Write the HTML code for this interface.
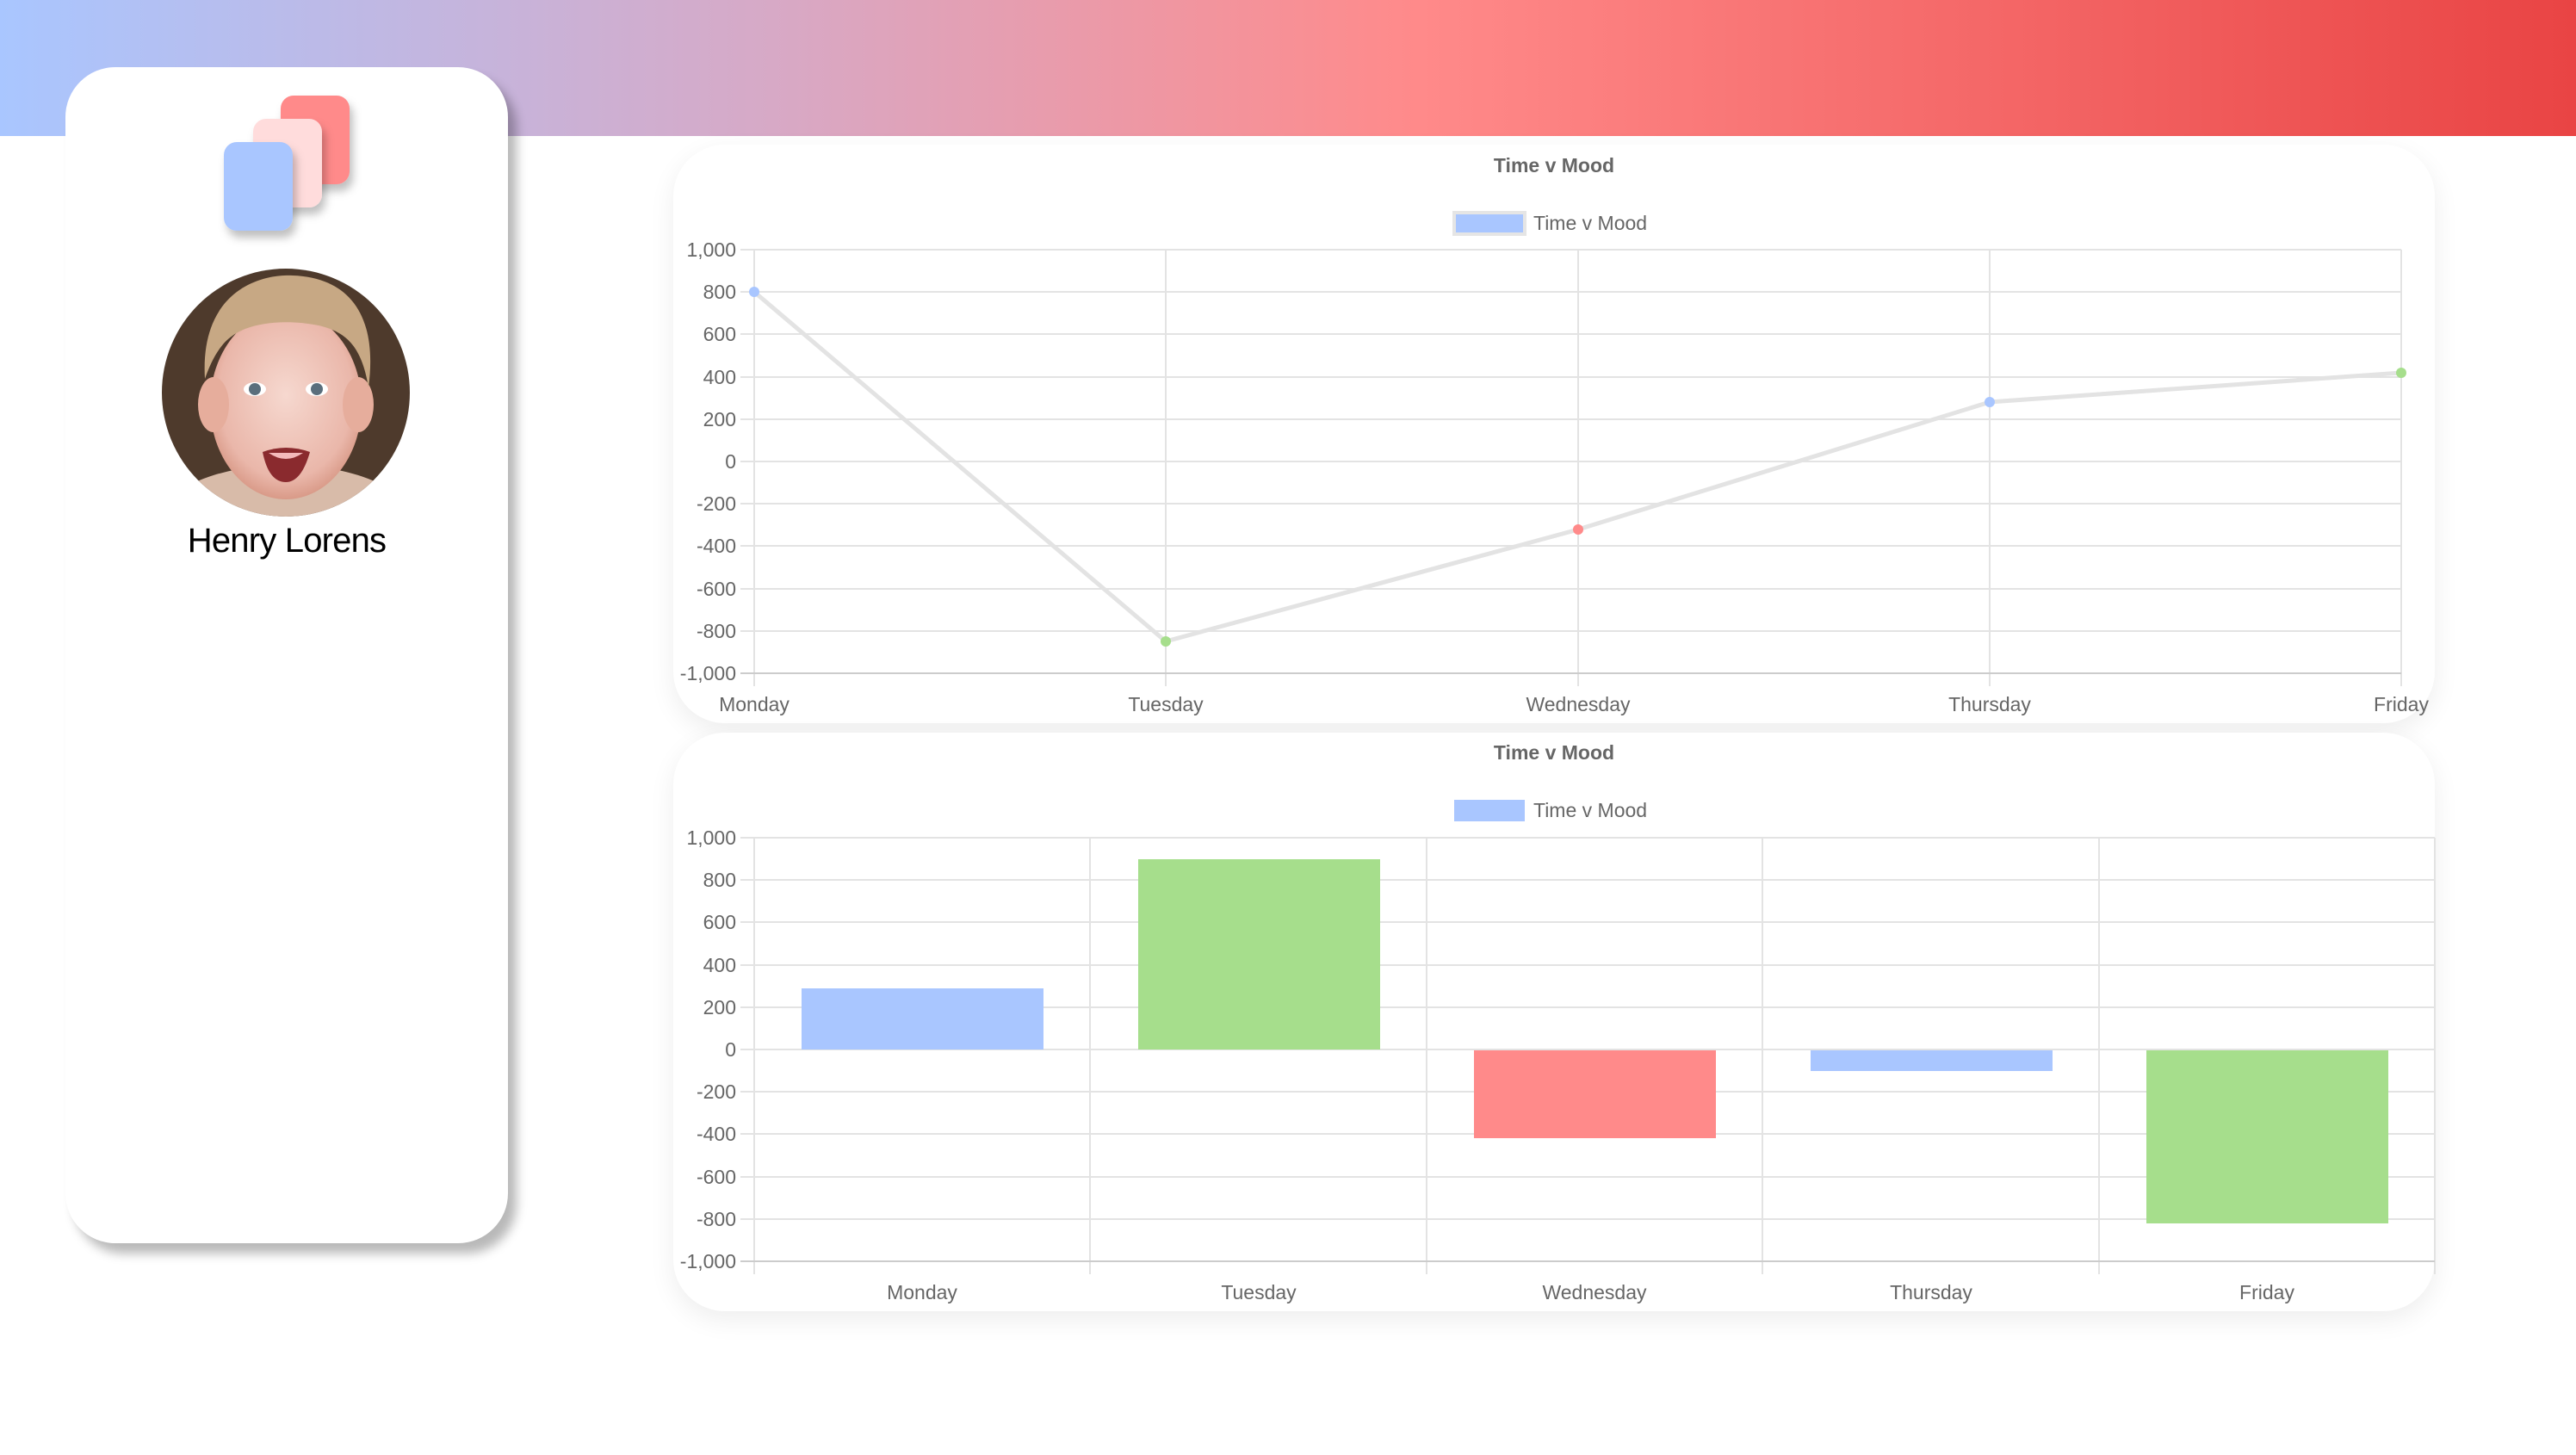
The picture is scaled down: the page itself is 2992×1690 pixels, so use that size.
<!DOCTYPE html>
<html><head><meta charset="utf-8"><style>
html,body{margin:0;padding:0;width:2992px;height:1690px;overflow:hidden;background:#fff;font-family:"Liberation Sans",Arial,sans-serif}
.hdr{position:absolute;left:0;top:0;width:2992px;height:158px;background:linear-gradient(90deg,#a9c6ff 0%,#d7a9c6 30%,#ff8a8a 55%,#e94444 100%)}
.side{position:absolute;left:76px;top:78px;width:514px;height:1366px;background:#fff;border-radius:58px;box-shadow:10px 12px 12px rgba(0,0,0,0.28)}
.card{position:absolute;left:782px;width:2046px;height:672px;background:#fff;border-radius:60px;box-shadow:0 10px 30px rgba(0,0,0,0.07)}
.name{position:absolute;left:76px;width:514px;top:606px;text-align:center;font-size:40px;color:#000;letter-spacing:-0.8px}
svg{position:absolute;left:0;top:0}
</style></head><body>
<div class="hdr"></div>
<div class="side"></div>
<div class="card" style="top:168px"></div>
<div class="card" style="top:851px"></div>
<svg width="2992" height="1690" font-family="Liberation Sans, Arial, sans-serif">
<defs>
<filter id="sh" x="-30%" y="-30%" width="160%" height="160%"><feDropShadow dx="4" dy="8" stdDeviation="5" flood-opacity="0.25"/></filter>
<clipPath id="cc"><circle cx="332" cy="456" r="144"/></clipPath>
<radialGradient id="face" cx="50%" cy="45%" r="55%"><stop offset="0" stop-color="#f6d8cf"/><stop offset="0.8" stop-color="#eab7aa"/><stop offset="1" stop-color="#d99a88"/></radialGradient>
</defs>
<rect x="326" y="111" width="80" height="103" rx="15" fill="#ff8a8a" filter="url(#sh)"/>
<rect x="294" y="138" width="80" height="103" rx="15" fill="#ffdcdc" filter="url(#sh)"/>
<rect x="260" y="165" width="80" height="103" rx="15" fill="#a9c6ff" filter="url(#sh)"/>
<g clip-path="url(#cc)">
<rect x="180" y="300" width="310" height="310" fill="#4e3a2c"/>
<ellipse cx="332" cy="610" rx="150" ry="70" fill="#d8bba9"/>
<ellipse cx="332" cy="470" rx="88" ry="110" fill="url(#face)"/>
<ellipse cx="248" cy="470" rx="18" ry="32" fill="#e6ad9c"/>
<ellipse cx="416" cy="470" rx="18" ry="32" fill="#e6ad9c"/>
<path d="M238 440 C232 340 300 318 340 320 C400 322 440 360 428 450 C420 400 400 385 370 378 C330 370 290 375 270 390 C255 400 245 420 238 440Z" fill="#c7a884"/>
<ellipse cx="296" cy="452" rx="13" ry="8" fill="#fff"/><circle cx="296" cy="452" r="7" fill="#5a6e7c"/>
<ellipse cx="368" cy="452" rx="13" ry="8" fill="#fff"/><circle cx="368" cy="452" r="7" fill="#5a6e7c"/>
<path d="M305 525 Q332 515 360 525 Q350 560 332 560 Q312 560 305 525Z" fill="#8a2a2e"/>
<path d="M312 526 Q332 540 352 526" fill="#f3b9bb"/>
</g>
<g font-size="23" fill="#666">
<text x="1805" y="200" text-anchor="middle" font-weight="bold">Time v Mood</text>
<rect x="1689" y="247" width="82" height="25" fill="#a9c6ff" stroke="#e5e5e5" stroke-width="4"/>
<text x="1781" y="267">Time v Mood</text>
<text x="1805" y="882" text-anchor="middle" font-weight="bold">Time v Mood</text>
<rect x="1689" y="929" width="82" height="25" fill="#a9c6ff"/>
<text x="1781" y="949">Time v Mood</text>
</g>
<g stroke="#e3e3e3" stroke-width="2">
<line x1="860" y1="290" x2="2789" y2="290"/><line x1="860" y1="339" x2="2789" y2="339"/><line x1="860" y1="388" x2="2789" y2="388"/><line x1="860" y1="438" x2="2789" y2="438"/><line x1="860" y1="487" x2="2789" y2="487"/><line x1="860" y1="536" x2="2789" y2="536"/><line x1="860" y1="585" x2="2789" y2="585"/><line x1="860" y1="634" x2="2789" y2="634"/><line x1="860" y1="684" x2="2789" y2="684"/><line x1="860" y1="733" x2="2789" y2="733"/>
<line x1="876" y1="290" x2="876" y2="797"/><line x1="1354" y1="290" x2="1354" y2="797"/><line x1="1833" y1="290" x2="1833" y2="797"/><line x1="2311" y1="290" x2="2311" y2="797"/><line x1="2789" y1="290" x2="2789" y2="797"/>
<line x1="860" y1="782" x2="2789" y2="782" stroke="#ccc"/>
</g>
<polyline points="876,339 1354,745 1833,615 2311,467 2789,433" fill="none" stroke="#e3e3e3" stroke-width="5"/>
<circle cx="876" cy="339" r="6" fill="#a9c6ff"/><circle cx="1354" cy="745" r="6" fill="#a6de8c"/><circle cx="1833" cy="615" r="6" fill="#ff8a8a"/><circle cx="2311" cy="467" r="6" fill="#a9c6ff"/><circle cx="2789" cy="433" r="6" fill="#a6de8c"/>
<g font-size="23" fill="#666" text-anchor="end">
<text x="855" y="298">1,000</text><text x="855" y="347">800</text><text x="855" y="396">600</text><text x="855" y="446">400</text><text x="855" y="495">200</text><text x="855" y="544">0</text><text x="855" y="593">-200</text><text x="855" y="642">-400</text><text x="855" y="692">-600</text><text x="855" y="741">-800</text><text x="855" y="790">-1,000</text>
</g>
<g font-size="23" fill="#666" text-anchor="middle">
<text x="876" y="826">Monday</text><text x="1354" y="826">Tuesday</text><text x="1833" y="826">Wednesday</text><text x="2311" y="826">Thursday</text><text x="2789" y="826">Friday</text>
</g>
<g stroke="#e3e3e3" stroke-width="2">
<line x1="860" y1="973" x2="2828" y2="973"/><line x1="860" y1="1022" x2="2828" y2="1022"/><line x1="860" y1="1071" x2="2828" y2="1071"/><line x1="860" y1="1121" x2="2828" y2="1121"/><line x1="860" y1="1170" x2="2828" y2="1170"/><line x1="860" y1="1219" x2="2828" y2="1219"/><line x1="860" y1="1268" x2="2828" y2="1268"/><line x1="860" y1="1317" x2="2828" y2="1317"/><line x1="860" y1="1367" x2="2828" y2="1367"/><line x1="860" y1="1416" x2="2828" y2="1416"/>
<line x1="876" y1="973" x2="876" y2="1480"/><line x1="1266" y1="973" x2="1266" y2="1480"/><line x1="1657" y1="973" x2="1657" y2="1480"/><line x1="2047" y1="973" x2="2047" y2="1480"/><line x1="2438" y1="973" x2="2438" y2="1480"/><line x1="2828" y1="973" x2="2828" y2="1480"/>
<line x1="860" y1="1465" x2="2828" y2="1465" stroke="#ccc"/>
</g>
<rect x="931" y="1148" width="281" height="71" fill="#a9c6ff"/>
<rect x="1322" y="998" width="281" height="221" fill="#a6de8c"/>
<rect x="1712" y="1220" width="281" height="102" fill="#ff8a8a"/>
<rect x="2103" y="1220" width="281" height="24" fill="#a9c6ff"/>
<rect x="2493" y="1220" width="281" height="201" fill="#a6de8c"/>
<g font-size="23" fill="#666" text-anchor="end">
<text x="855" y="981">1,000</text><text x="855" y="1030">800</text><text x="855" y="1079">600</text><text x="855" y="1129">400</text><text x="855" y="1178">200</text><text x="855" y="1227">0</text><text x="855" y="1276">-200</text><text x="855" y="1325">-400</text><text x="855" y="1375">-600</text><text x="855" y="1424">-800</text><text x="855" y="1473">-1,000</text>
</g>
<g font-size="23" fill="#666" text-anchor="middle">
<text x="1071" y="1509">Monday</text><text x="1462" y="1509">Tuesday</text><text x="1852" y="1509">Wednesday</text><text x="2243" y="1509">Thursday</text><text x="2633" y="1509">Friday</text>
</g>
</svg>
<div class="name">Henry Lorens</div>
</body></html>
